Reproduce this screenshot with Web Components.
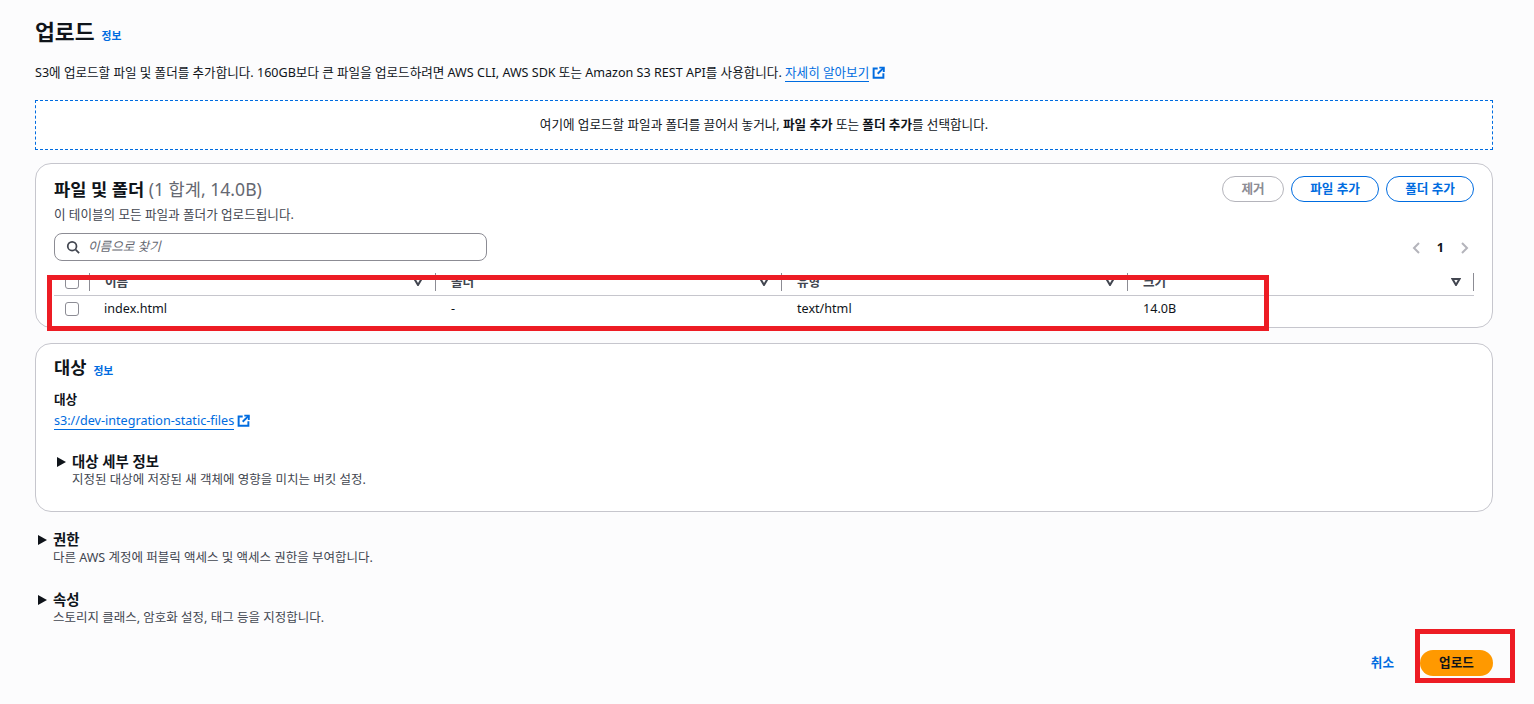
<!DOCTYPE html>
<html lang="ko"><head><meta charset="utf-8"><style>
html,body{margin:0;padding:0;height:704px;overflow:hidden;background:#fcfcfd}
body{font:12.6px/18px "Noto Sans","Noto Sans CJK KR",sans-serif;color:#0f141a}
</style></head><body>
<upload-page></upload-page>
<script>
const T=(h)=>{const t=document.createElement('template');t.innerHTML=h;return t};
function def(name,html){customElements.define(name,class extends HTMLElement{constructor(){super();this.attachShadow({mode:'open'}).appendChild(T(html).content.cloneNode(true))}})}
def('ext-icon',`<style>:host{display:inline-block;width:13px;height:13px;vertical-align:-2px;margin-left:3px}svg{display:block}</style>
<svg width="13" height="13" viewBox="0 0 16 16" fill="none" stroke="#006ce0" stroke-width="2.4"><path d="M14 9v5.5H2V3h5"/><path d="M9 2h5.5v5.5"/><path d="M14.5 2 7 9.5"/></svg>`);
def('info-link',`<style>:host{display:inline-block;font-size:10.8px;line-height:14px;font-weight:700;color:#006ce0}</style><slot></slot>`);
def('pill-btn',`<style>:host{display:inline-flex;box-sizing:border-box;height:26px;align-items:center;justify-content:center;border:1.5px solid #006ce0;border-radius:13px;color:#006ce0;font-size:12.6px;font-weight:700;background:#fff}
:host([off]){border-color:#b4b4bb;color:#8c8c94;border-width:1px}</style><slot></slot>`);
def('caret-tri',`<style>:host{display:block;width:9px;height:10px;flex:none}svg{display:block}</style><svg width="9" height="10" viewBox="0 0 9 10"><path d="M0 0 9 5 0 10z" fill="#0f141a"/></svg>`);
def('x-section',`<style>:host{display:block}
.h{display:flex;align-items:center;gap:6px;font-size:14.4px;line-height:18px;font-weight:700}
.d{font-size:12.5px;line-height:18px;color:#424650;padding-left:15px}</style>
<div class="h"><caret-tri></caret-tri><slot name="t"></slot></div><div class="d"><slot name="d"></slot></div>`);
def('chk-box',`<style>:host{display:block;box-sizing:border-box;width:14px;height:14px;border:1px solid #8c8c94;border-radius:3px;background:#fff}</style>`);
def('sort-ico',`<style>:host{display:block;width:10px;height:8px}svg{display:block}</style><svg width="10" height="8" viewBox="0 0 10 8"><path d="M1.5 1h7L5 7z" fill="none" stroke="#424650" stroke-width="2"/></svg>`);
def('th-cell',`<style>:host{display:flex;box-sizing:border-box;align-items:center;justify-content:space-between;padding:0 12px 0 15px;font-size:12.6px;font-weight:700;color:#424650;border-right:1px solid #8c8c94}
</style><slot></slot><sort-ico></sort-ico>`);
def('file-table',`<style>:host{display:block}
.hd,.row{display:grid;grid-template-columns:36px 346px 346px 346px 346px}
.hd{height:22px;border-bottom:1px solid #c6c6cd;align-items:start}
.hd>*{height:18px}
.hd>div:first-child{display:flex;align-items:center;padding-left:11px;border-right:1px solid #8c8c94;box-sizing:border-box}
.row{height:26px;align-items:center;font-size:12.6px}
.row>div{padding-left:15px}.row>div:first-child{padding-left:11px}
.row>div:nth-child(2){padding-left:14px}
</style>
<div class="hd"><div><chk-box></chk-box></div><th-cell>이름</th-cell><th-cell>폴더</th-cell><th-cell>유형</th-cell><th-cell>크기</th-cell></div>
<div class="row"><div><chk-box></chk-box></div><div>index.html</div><div>-</div><div>text/html</div><div>14.0B</div></div>`);
def('files-card',`<style>:host{display:block;box-sizing:border-box;height:165px;background:#fff;border:1px solid #c6c6cd;border-radius:16px;padding:12px 18px 0}
.top{display:flex;justify-content:space-between;align-items:flex-start;height:40px}
h2{margin:0;font-size:17.6px;line-height:26px;font-weight:700}h2 span{font-weight:400;color:#656871}
.sub{font-size:12.6px;line-height:16px;color:#424650;margin-top:5px}
.btns{display:flex;gap:7px}
.search{display:flex;justify-content:space-between;align-items:center;margin-top:17px;height:28px}
.inp{box-sizing:border-box;width:433px;height:28px;border:1px solid #8c8c94;border-radius:8px;display:flex;align-items:center;gap:8px;padding-left:11px;font-size:12.6px;font-style:italic;color:#656871}
.pg{display:flex;align-items:center;gap:17px;padding-right:5px;font-size:12.6px;font-weight:700;padding-top:2px}
svg{display:block}
file-table{margin-top:12px}
</style>
<div class="top"><div><h2>파일 및 폴더 <span>(1 합계, 14.0B)</span></h2><div class="sub">이 테이블의 모든 파일과 폴더가 업로드됩니다.</div></div>
<div class="btns"><pill-btn off style="width:62px">제거</pill-btn><pill-btn style="width:88px">파일 추가</pill-btn><pill-btn style="width:88px">폴더 추가</pill-btn></div></div>
<div class="search"><div class="inp"><svg width="14" height="14" viewBox="0 0 16 16" fill="none" stroke="#424650" stroke-width="2"><circle cx="7" cy="7" r="5"/><path d="m11 11 4 4"/></svg>이름으로 찾기</div>
<div class="pg"><svg width="8" height="12" viewBox="0 0 8 12" fill="none" stroke="#b4b4bb" stroke-width="2"><path d="M7 1 2 6l5 5"/></svg><span>1</span><svg width="8" height="12" viewBox="0 0 8 12" fill="none" stroke="#b4b4bb" stroke-width="2"><path d="m1 1 5 5-5 5"/></svg></div></div>
<file-table></file-table>`);
def('dest-card',`<style>:host{display:block;box-sizing:border-box;height:169px;margin-top:15px;background:#fff;border:1px solid #c6c6cd;border-radius:16px;padding:10px 18px 0}
h2{margin:0;font-size:17.6px;line-height:26px;font-weight:700;display:flex;align-items:center;gap:7px}
.l{font-size:12.6px;font-weight:700;line-height:18px;margin-top:11px}
a{color:#006ce0;text-decoration:none;border-bottom:1px solid #006ce0}
.lk{margin-top:3px;line-height:18px;height:18px;font-size:12.6px}
x-section{margin-top:23px;padding-left:3px}
</style><h2>대상 <info-link style="margin-top:7px">정보</info-link></h2><div class="l">대상</div>
<div class="lk"><a>s3://dev-integration-static-files</a><ext-icon></ext-icon></div>
<x-section><span slot="t">대상 세부 정보</span><span slot="d">지정된 대상에 저장된 새 객체에 영향을 미치는 버킷 설정.</span></x-section>`);
def('upload-page',`<style>:host{display:block;position:relative;box-sizing:border-box;width:1534px;height:704px;padding:17px 41px 0 35px}
.t{display:flex;align-items:center;gap:7px;height:28px}
h1{margin:2px 0 0;font-size:21.6px;line-height:28px;font-weight:700}
info-link{margin-top:10px}
.desc{font-size:12.57px;line-height:18px;margin-top:19px}
.link{color:#006ce0;border-bottom:1px solid #006ce0}
.drop{box-sizing:border-box;height:50px;margin-top:18px;border:1px dashed #006ce0;background:#fff;display:flex;align-items:center;justify-content:center;font-size:12.6px}
.drop b{font-weight:700}
files-card{margin-top:13px}
.sec1{margin-top:19px;padding-left:3px}.sec2{margin-top:24px;padding-left:3px}
.foot{display:flex;justify-content:flex-end;align-items:center;gap:26px;margin-top:23px;font-size:12.6px;font-weight:700;color:#006ce0}
.go{box-sizing:border-box;width:73px;height:26px;border-radius:13px;background:#ff9900;color:#0f141a;display:flex;align-items:center;justify-content:center}
.red{position:absolute;box-sizing:border-box;border:5px solid #ed1c24;pointer-events:none}
</style>
<div class="t"><h1>업로드</h1><info-link>정보</info-link></div>
<div class="desc">S3에 업로드할 파일 및 폴더를 추가합니다. 160GB보다 큰 파일을 업로드하려면 AWS CLI, AWS SDK 또는 Amazon S3 REST API를 사용합니다. <a class="link">자세히 알아보기</a><ext-icon></ext-icon></div>
<div class="drop"><span>여기에 업로드할 파일과 폴더를 끌어서 놓거나, <b>파일 추가</b> 또는 <b>폴더 추가</b>를 선택합니다.</span></div>
<files-card></files-card><dest-card></dest-card>
<x-section class="sec1"><span slot="t">권한</span><span slot="d">다른 AWS 계정에 퍼블릭 액세스 및 액세스 권한을 부여합니다.</span></x-section>
<x-section class="sec2"><span slot="t">속성</span><span slot="d">스토리지 클래스, 암호화 설정, 태그 등을 지정합니다.</span></x-section>
<div class="foot"><span>취소</span><div class="go">업로드</div></div>
<div class="red" style="left:47px;top:275px;width:1222px;height:56px"></div>
<div class="red" style="left:1415px;top:629px;width:100px;height:54px"></div>`);
</script>
</body></html>
